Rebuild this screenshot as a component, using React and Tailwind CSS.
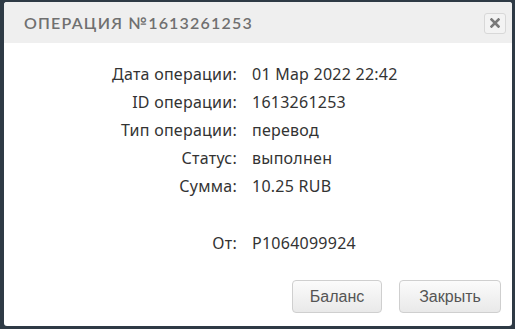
export default function App() {
  const rows = [
    ["Дата операции:", "01 Мар 2022 22:42"],
    ["ID операции:", "1613261253"],
    ["Тип операции:", "перевод"],
    ["Статус:", "выполнен"],
    ["Сумма:", "10.25 RUB"],
  ];
  const btn =
    "h-[33px] rounded-[4px] border border-[#cfcfcf] bg-gradient-to-b from-[#fbfbfb] to-[#e9e9e9] text-[16px] text-[#555] font-['Liberation_Sans',sans-serif]";
  return (
    <div className="w-[515px] h-[329px] bg-[#2e3a45] pt-[2px] pl-[4px] pr-[3px] pb-[3px]">
      <div className="w-[508px] h-[324px] bg-white rounded-[3px] flex flex-col overflow-hidden">
        <div className="h-[41px] bg-[#efefef] flex items-center justify-between pl-[20px] pr-[6px]">
          <span className="text-[16px] font-semibold tracking-[1.2px] text-[#707070] font-['Lato',sans-serif]">
            ОПЕРАЦИЯ №1613261253
          </span>
          <div className="w-[22px] h-[21px] mt-[1px] border border-[#d8d8d8] rounded-[3px] bg-[#f3f3f3] flex items-center justify-center">
            <svg width="10" height="10" viewBox="0 0 10 10">
              <path d="M1.5 1.5L8.5 8.5M8.5 1.5L1.5 8.5" stroke="#7a7a7a" strokeWidth="2.6" strokeLinecap="square" />
            </svg>
          </div>
        </div>
        <div className="pt-[17px] grid grid-cols-[233px_auto] gap-x-[15px] text-[16px] tracking-[0.25px] text-[#333] font-['Noto_Sans',sans-serif]">
          {rows.map(([l, v]) => (
            <div key={l} className="contents">
              <div className="h-[28px] flex items-center justify-end">{l}</div>
              <div className="h-[28px] flex items-center">{v}</div>
            </div>
          ))}
          <div className="h-[29px]" />
          <div className="h-[29px]" />
          <div className="h-[28px] flex items-center justify-end">От:</div>
          <div className="h-[28px] flex items-center">P1064099924</div>
        </div>
        <div className="mt-[23px] flex justify-end gap-[17px] pr-[11px]">
          <button className={btn + " w-[90px]"}>Баланс</button>
          <button className={btn + " w-[102px]"}>Закрыть</button>
        </div>
      </div>
    </div>
  );
}
